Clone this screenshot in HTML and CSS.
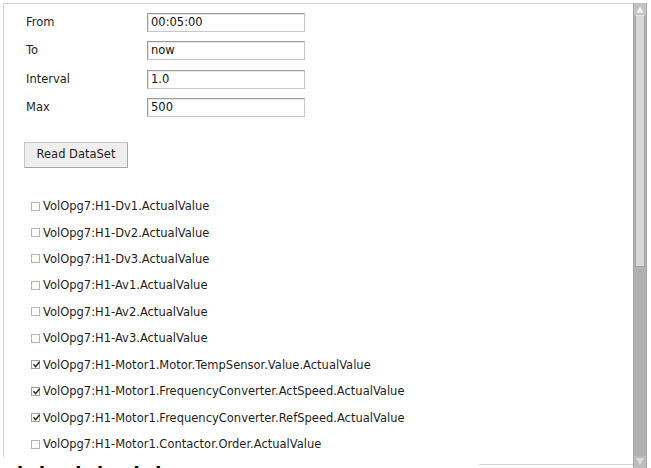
FILE: index.html
```html
<!DOCTYPE html>
<html>
<head>
<meta charset="utf-8">
<link rel="stylesheet" href="styles.css">
</head>
<body>
<div class="frame">
  <div class="main">
    <div class="pane">
      <div class="form">
        <label class="lbl">From</label><div class="field">00:05:00</div>
        <label class="lbl">To</label><div class="field">now</div>
        <label class="lbl">Interval</label><div class="field">1.0</div>
        <label class="lbl">Max</label><div class="field">500</div>
      </div>
      <div class="btn">Read DataSet</div>
      <ul class="list">
        <li><span class="cb"></span>VolOpg7:H1-Dv1.ActualValue</li>
        <li><span class="cb"></span>VolOpg7:H1-Dv2.ActualValue</li>
        <li><span class="cb"></span>VolOpg7:H1-Dv3.ActualValue</li>
        <li><span class="cb"></span>VolOpg7:H1-Av1.ActualValue</li>
        <li><span class="cb"></span>VolOpg7:H1-Av2.ActualValue</li>
        <li><span class="cb"></span>VolOpg7:H1-Av3.ActualValue</li>
        <li><span class="cb on"><svg viewBox="0 0 9 9" width="9" height="9"><path d="M1.5 4.2 L3.6 6.6 L7.6 1.8" fill="none" stroke="#222" stroke-width="1.4"/></svg></span>VolOpg7:H1-Motor1.Motor.TempSensor.Value.ActualValue</li>
        <li><span class="cb on"><svg viewBox="0 0 9 9" width="9" height="9"><path d="M1.5 4.2 L3.6 6.6 L7.6 1.8" fill="none" stroke="#222" stroke-width="1.4"/></svg></span>VolOpg7:H1-Motor1.FrequencyConverter.ActSpeed.ActualValue</li>
        <li><span class="cb on"><svg viewBox="0 0 9 9" width="9" height="9"><path d="M1.5 4.2 L3.6 6.6 L7.6 1.8" fill="none" stroke="#222" stroke-width="1.4"/></svg></span>VolOpg7:H1-Motor1.FrequencyConverter.RefSpeed.ActualValue</li>
        <li><span class="cb"></span>VolOpg7:H1-Motor1.Contactor.Order.ActualValue</li>
      </ul>
    </div>
    <div class="footer">
      <div class="heading">idaldald</div>
      <div class="next"></div>
    </div>
  </div>
  <div class="scrollbar">
    <div class="arrow up"><svg viewBox="0 0 10 10" width="10" height="10"><path d="M1 9 L5 1.5 L9 9 Z" fill="#f0f0f0" stroke="#c4c4c4" stroke-width="0.8"/></svg></div>
    <div class="thumb"></div>
    <div class="track"></div>
    <div class="arrow down"><svg viewBox="0 0 10 10" width="10" height="10"><path d="M1 1 L5 8.5 L9 1 Z" fill="#e0e0e0" stroke="#c4c4c4" stroke-width="0.8"/></svg></div>
  </div>
</div>
</body>
</html>
```
FILE: styles.css
```css
html, body {
  margin: 0;
  padding: 0;
  background: #ffffff;
  overflow: hidden;
}
body {
  font-family: "DejaVu Sans", sans-serif;
  font-size: 11.5px;
  color: #1e1e1e;
}
.frame {
  display: flex;
  margin: 3px 0 0 3px;
  height: 465px;
}
.main {
  width: 630px;
  display: flex;
  flex-direction: column;
}
.pane {
  height: 454px;
  border-top: 1px solid #d2d2d2;
  border-left: 1px solid #d2d2d2;
  box-sizing: border-box;
  padding: 9px 0 0 22px;
  overflow: hidden;
}
.form {
  display: grid;
  grid-template-columns: 121px 158px;
  row-gap: 9.3px;
  align-items: center;
}
.lbl {
  line-height: 19px;
}
.field {
  height: 19px;
  box-sizing: border-box;
  border: 1px solid #c8c8c8;
  border-top-color: #9c9c9c;
  border-left-color: #9c9c9c;
  box-shadow: inset 1px 1px 0 #e6e6e6;
  padding: 0 0 0 3px;
  line-height: 17px;
  color: #111;
}
.btn {
  margin: 25px 0 0 -2px;
  width: 104px;
  height: 26px;
  box-sizing: border-box;
  border: 1px solid #c6c6c6;
  border-right-color: #a8a8a8;
  border-bottom-color: #a8a8a8;
  background: #eeeeee;
  text-align: center;
  line-height: 23px;
  color: #1e1e1e;
}
.list {
  list-style: none;
  margin: 25px 0 0 5px;
  padding: 0;
}
.list li {
  height: 26.45px;
  display: flex;
  align-items: center;
  white-space: nowrap;
}
.cb {
  width: 9px;
  height: 9px;
  border: 1px solid #b4b4b4;
  box-sizing: border-box;
  margin-right: 3px;
  display: inline-flex;
  align-items: center;
  justify-content: center;
  background: #fff;
  position: relative;
  flex: none;
}
.cb.on {
  border-color: #a0a0a0;
}
.cb svg {
  position: absolute;
  left: 0;
  top: -1px;
}
.footer {
  display: flex;
  height: 11px;
  align-items: flex-start;
}
.heading {
  width: 476px;
  overflow: hidden;
  height: 7px;
  margin-top: 8px;
  padding-left: 14px;
  box-sizing: border-box;
  font-family: "DejaVu Sans", sans-serif;
  font-weight: bold;
  font-size: 18px;
  letter-spacing: 9px;
  line-height: 1;
  color: #000;
}
.next {
  flex: 1;
  margin-top: 7px;
  border-top: 1px solid #d2d2d2;
}
.scrollbar {
  width: 12px;
  display: flex;
  flex-direction: column;
  background: #b0b0b0;
  border-left: 1px solid #a6a6a6;
  border-right: 1px solid #a6a6a6;
}
.arrow {
  height: 12px;
  display: flex;
  align-items: center;
  justify-content: center;
  background: #bcbcbc;
}
.arrow.up {
  background: #c4c4c4;
}
.thumb {
  height: 250px;
  background: #d8d8d8;
  border: 1px solid #a4a4a4;
  border-top-color: #e4e4e4;
  margin: 0 1px;
}
.track {
  flex: 1;
  background: #b0b0b0;
}
```
